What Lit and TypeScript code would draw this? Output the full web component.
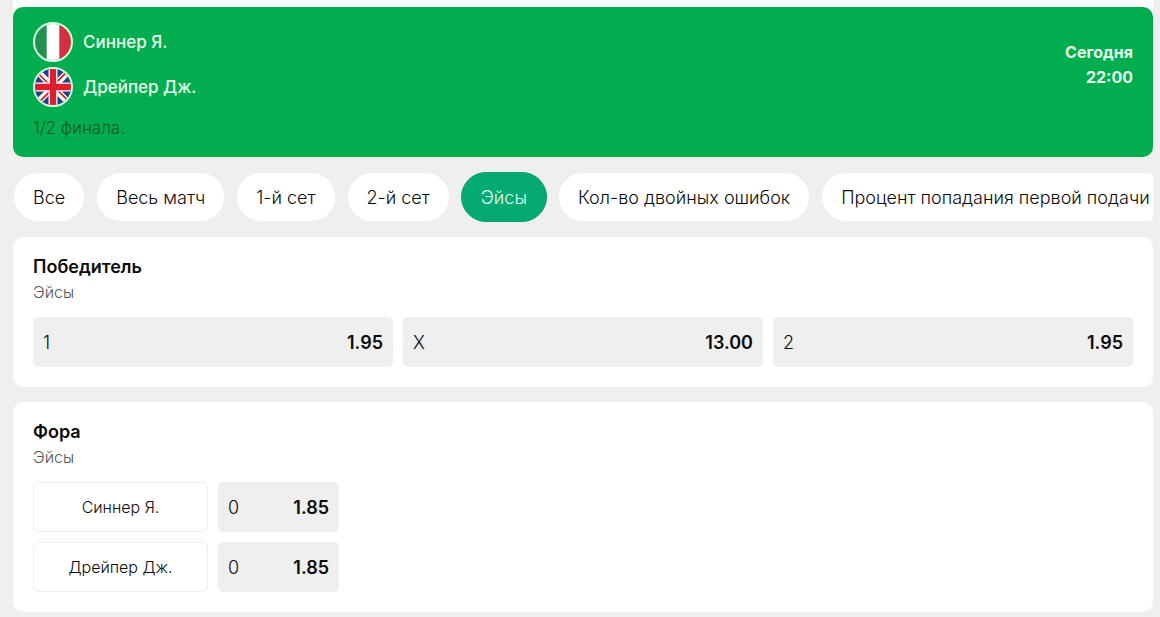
import { LitElement, html, css, svg } from "lit";
import { customElement, state } from "lit/decorators.js";
import { classMap } from "lit/directives/class-map.js";

const TABS = [
  "Все",
  "Весь матч",
  "1-й сет",
  "2-й сет",
  "Эйсы",
  "Кол-во двойных ошибок",
  "Процент попадания первой подачи",
];

const WINNER = [
  { name: "1", odds: "1.95" },
  { name: "X", odds: "13.00" },
  { name: "2", odds: "1.95" },
];

const HANDICAP = [
  { player: "Синнер Я.", line: "0", odds: "1.85" },
  { player: "Дрейпер Дж.", line: "0", odds: "1.85" },
];

const italy = svg`
  <rect width="40" height="40" fill="#fff"/>
  <rect width="13" height="40" fill="#229150"/>
  <rect x="27" width="13" height="40" fill="#d22f3f"/>`;

const britain = svg`
  <rect width="40" height="40" fill="#1f3f86"/>
  <path d="M0 0 40 40M40 0 0 40" stroke="#fff" stroke-width="7"/>
  <path d="M0 1.5 20 21.5M20 18.5 40 38.5M38.5 0 18.5 20M21.5 20 1.5 40" stroke="#d8232f" stroke-width="2"/>
  <path d="M20 0V40M0 20H40" stroke="#fff" stroke-width="10"/>
  <path d="M20 0V40M0 20H40" stroke="#dc1f2b" stroke-width="7"/>`;

@customElement("odds-button")
class OddsButton extends LitElement {
  static properties = { name: {}, odds: {} };
  declare name: string;
  declare odds: string;

  static styles = css`
    :host {
      display: block;
    }
    .odd {
      display: flex;
      align-items: center;
      justify-content: space-between;
      width: 100%;
      height: 50px;
      padding: 2px 10px 0;
      border: 0;
      border-radius: 5px;
      background: #efefef;
      color: #0b0b0b;
      font: 300 18px/24px Inter, sans-serif;
      cursor: pointer;
    }
    .value {
      font-weight: 600;
    }
  `;

  render() {
    return html`<button class="odd" type="button">
      <span>${this.name}</span><span class="value">${this.odds}</span>
    </button>`;
  }
}

@customElement("market-card")
class MarketCard extends LitElement {
  static properties = { heading: {}, note: {} };
  declare heading: string;
  declare note: string;

  static styles = css`
    :host {
      display: block;
      padding: 17px 20px 20px;
      border-radius: 10px;
      background: #fff;
    }
    .heading {
      margin: 0;
      font-size: 18px;
      line-height: 26px;
      font-weight: 600;
      color: #0b0b0b;
    }
    .note {
      margin: 0 0 12px;
      font-size: 16px;
      line-height: 25px;
      color: #555;
    }
  `;

  render() {
    return html`
      <h2 class="heading">${this.heading}</h2>
      <p class="note">${this.note}</p>
      <slot></slot>
    `;
  }
}

@customElement("app-root")
class AppRoot extends LitElement {
  @state() private active = 4;

  static styles = css`
    :host {
      display: block;
      box-sizing: border-box;
      min-height: 100vh;
      padding: 0 7px 5px 13px;
      background: #efefef;
      font-family: Inter, sans-serif;
      font-weight: 300;
    }
    .top {
      padding-top: 7px;
      background: linear-gradient(#fff 12px, transparent 12px);
    }
    .match {
      display: flex;
      align-items: flex-start;
      justify-content: space-between;
      padding: 15px 20px 16px;
      border-radius: 10px;
      background: #02ad50;
      color: #e4ffec;
    }
    .players {
      display: grid;
      gap: 5px;
      margin: 0;
      padding: 0;
      list-style: none;
    }
    .player {
      display: flex;
      align-items: center;
      gap: 10px;
      font-size: 17px;
      font-weight: 500;
    }
    .flag {
      width: 36px;
      height: 36px;
      border: 2px solid #d9fbe3;
      border-radius: 50%;
    }
    .stage {
      margin: 8px 0 0;
      font-size: 17px;
      line-height: 26px;
      color: #0b5a1c;
    }
    .time {
      padding-top: 18px;
      font-size: 16px;
      line-height: 25px;
      font-weight: 700;
      text-align: right;
    }
    .time span {
      display: block;
    }
    .tabs {
      display: flex;
      gap: 11px;
      margin: 15px 0;
      overflow: hidden;
      border-radius: 5px;
    }
    .tab {
      flex: none;
      height: 50px;
      padding: 2px 19px 0;
      border: 1px solid #efefef;
      border-radius: 25px;
      background: #fff;
      color: #0b0b0b;
      font: 300 18px/24px Inter, sans-serif;
      cursor: pointer;
    }
    .tab.active {
      border-color: #05a06b;
      background: #05a973;
      color: #e0fff2;
    }
    .cards {
      display: grid;
      gap: 15px;
    }
    .thirds {
      display: grid;
      grid-template-columns: repeat(3, 1fr);
      gap: 10px;
    }
    .lines {
      display: grid;
      grid-template-columns: 175px 121px;
      gap: 10px;
    }
    .name {
      display: flex;
      align-items: center;
      justify-content: center;
      border: 1px solid #efefef;
      border-radius: 5px;
      font-size: 16px;
      color: #0b0b0b;
    }
  `;

  render() {
    return html`
      <header class="top">
        <div class="match">
          <div>
            <ul class="players">
              <li class="player">
                <svg class="flag" viewBox="0 0 40 40" aria-hidden="true">${italy}</svg>Синнер Я.
              </li>
              <li class="player">
                <svg class="flag" viewBox="0 0 40 40" aria-hidden="true">${britain}</svg>Дрейпер Дж.
              </li>
            </ul>
            <p class="stage">1/2 финала.</p>
          </div>
          <time class="time"><span>Сегодня</span><span>22:00</span></time>
        </div>
      </header>
      <nav class="tabs">
        ${TABS.map(
          (label, i) => html`<button
            type="button"
            class=${classMap({ tab: true, active: i === this.active })}
            @click=${() => (this.active = i)}
          >${label}</button>`
        )}
      </nav>
      <main class="cards">
        <market-card heading="Победитель" note="Эйсы">
          <div class="thirds">
            ${WINNER.map((o) => html`<odds-button .name=${o.name} .odds=${o.odds}></odds-button>`)}
          </div>
        </market-card>
        <market-card heading="Фора" note="Эйсы">
          <div class="lines">
            ${HANDICAP.map(
              (o) => html`<div class="name">${o.player}</div>
                <odds-button .name=${o.line} .odds=${o.odds}></odds-button>`
            )}
          </div>
        </market-card>
      </main>
    `;
  }
}
